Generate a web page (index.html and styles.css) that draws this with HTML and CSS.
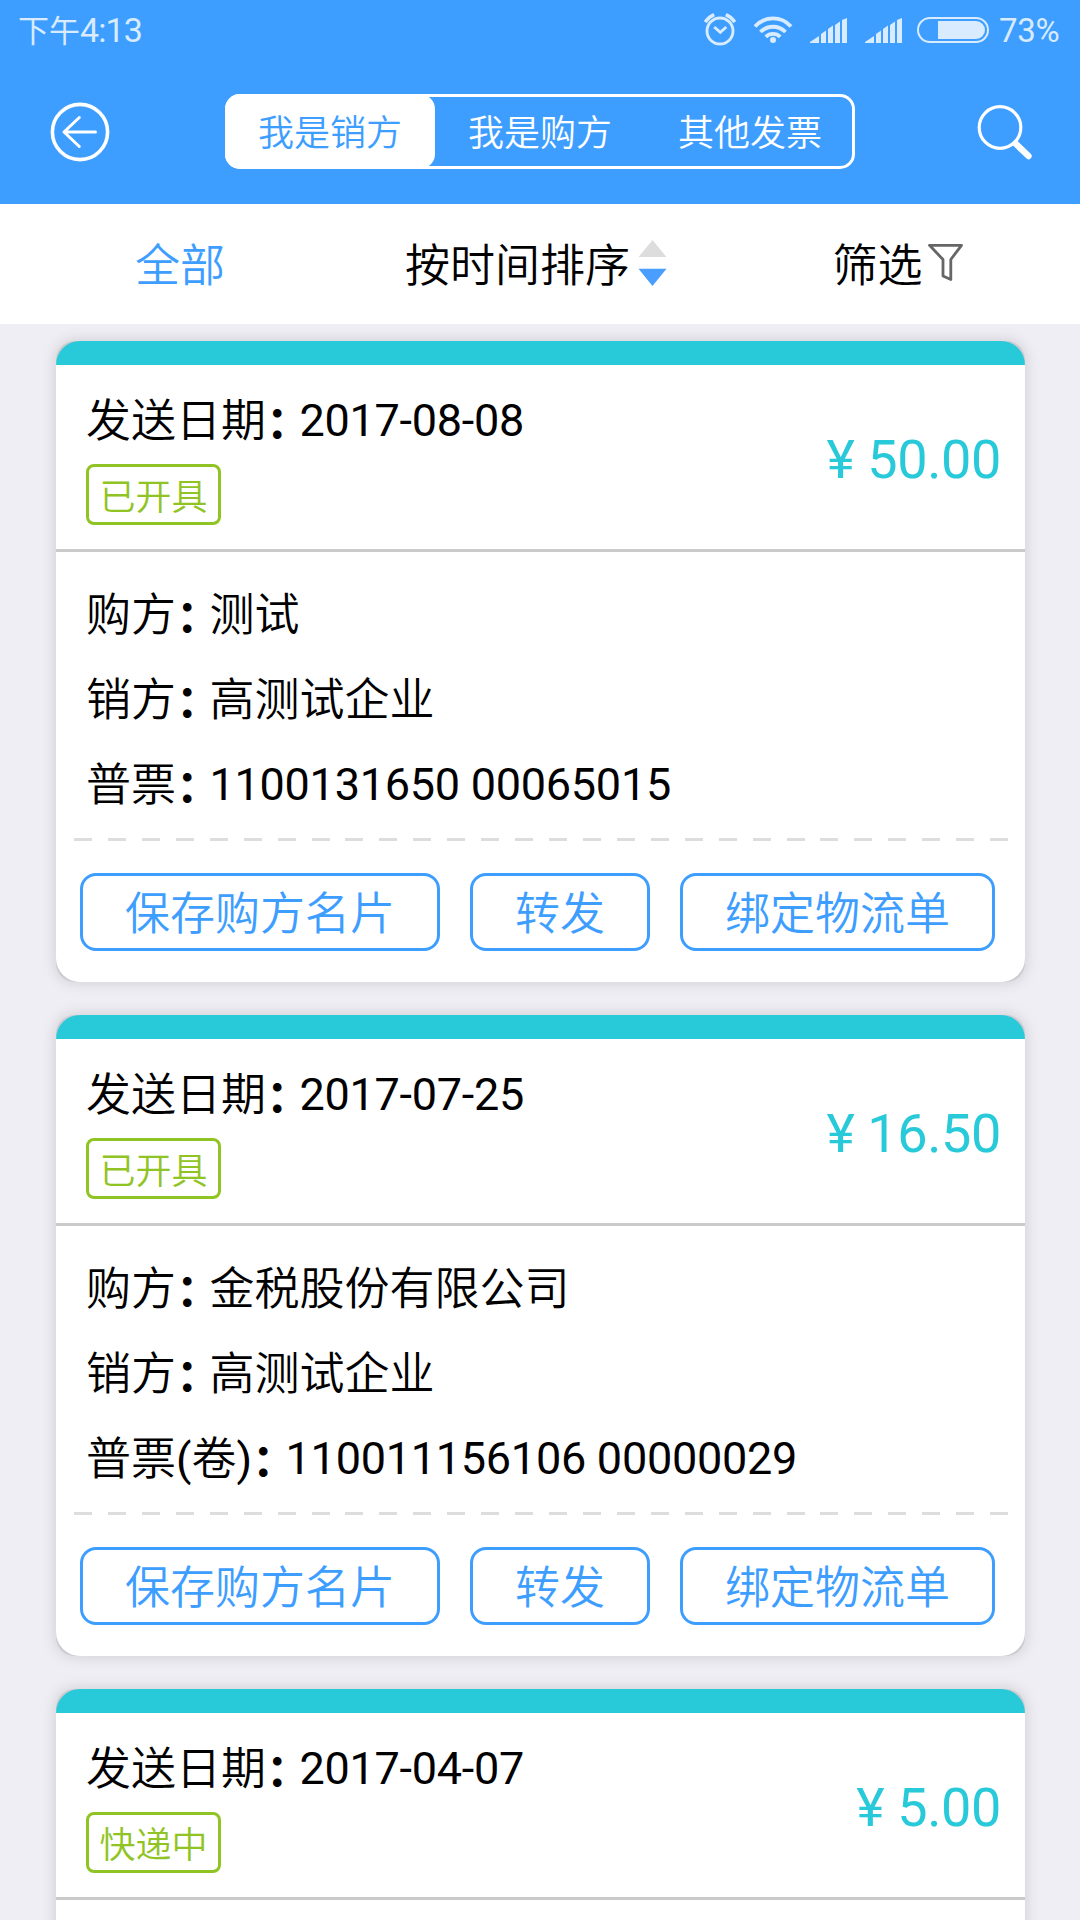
FILE: index.html
```
<!DOCTYPE html>
<html lang="zh-CN">
<head>
<meta charset="utf-8">
<title>发票</title>
<link rel="stylesheet" href="styles.css">
</head>
<body>
<div class="screen">
  <header class="header">
    <div class="status">
      <span class="clock">下午<span class="digits">4:13</span></span>
      <div class="status-icons">
        <svg class="i-alarm" width="34" height="34" viewBox="0 0 34 34" fill="none" stroke="currentColor" stroke-width="2.9">
          <circle cx="17" cy="19" r="13"/>
          <path d="M11.2 15l6.1 5.4 6-5.4"/>
          <path d="M2.2 10.2Q5.5 5 11.2 2.6M31.8 10.2Q28.5 5 22.8 2.6" stroke-width="3.4"/>
        </svg>
        <svg class="i-wifi" width="40" height="30" viewBox="0 0 40 30" fill="none" stroke="currentColor" stroke-width="3.8">
          <path d="M2 12.6A24 24 0 0 1 38 12.6"/>
          <path d="M7.5 18A17.5 17.5 0 0 1 32.5 18"/>
          <path d="M12.8 22.8A10.3 10.3 0 0 1 27.2 22.8"/>
          <circle cx="20" cy="26" r="3" fill="currentColor" stroke="none"/>
        </svg>
        <svg class="i-signal" width="37" height="26" viewBox="0 0 37 26" fill="currentColor">
          <path d="M0 25v-1l9-6v7zM11 25V16l5-3.5V25zM18 25V11l5-3.5V25zM25 25V7l5-3.5V25zM32 25V2l5-2V25z"/>
        </svg>
        <svg class="i-signal" width="37" height="26" viewBox="0 0 37 26" fill="currentColor">
          <path d="M0 25v-1l9-6v7zM11 25V16l5-3.5V25zM18 25V11l5-3.5V25zM25 25V7l5-3.5V25zM32 25V2l5-2V25z"/>
        </svg>
        <svg class="i-battery" width="72" height="26" viewBox="0 0 72 26">
          <rect x="1" y="1" width="70" height="24" rx="12" fill="none" stroke="currentColor" stroke-width="2"/>
          <path d="M21 4H59a9 9 0 0 1 0 18H21z" fill="currentColor"/>
        </svg>
        <span class="percent">73%</span>
      </div>
    </div>
    <nav class="nav">
      <svg class="i-back" width="60" height="60" viewBox="0 0 60 60" fill="none" stroke="#fff" stroke-linecap="round" stroke-linejoin="round">
        <circle cx="30" cy="30" r="27.6" stroke-width="3.6"/>
        <path d="M45.5 30H14M29.3 15.5L14 30L29.3 44.5" stroke-width="3"/>
      </svg>
      <div class="tabs">
        <span class="tab active">我是销方</span>
        <span class="tab">我是购方</span>
        <span class="tab">其他发票</span>
      </div>
      <svg class="i-search" width="56" height="56" viewBox="0 0 56 56" fill="none" stroke="#fff" stroke-linecap="round">
        <circle cx="23" cy="23.5" r="20.8" stroke-width="3.2"/>
        <path d="M38.5 39.5L51.5 52" stroke-width="6.4"/>
      </svg>
    </nav>
  </header>
  <div class="filters">
    <div class="filter on">全部</div>
    <div class="filter">按时间排序<svg width="45" height="48" viewBox="0 0 45 48"><path d="M22.5 0L36.5 17H8.5z" fill="#ddd"/><path d="M22.5 46L36.5 28.7H8.5z" fill="#4a9eff"/></svg></div>
    <div class="filter">筛选<svg width="45" height="48" viewBox="0 0 45 48" fill="none" stroke="#666" stroke-width="2.8" stroke-linejoin="round"><path d="M6.5 5.3H38.5L27.8 19.5V39.5L20 36V19.5z"/></svg></div>
  </div>
  <main class="list">
    <section class="card"><div class="sheet">
      <div class="summary">
        <div class="meta"><div class="line">发送日期<span class="colon">：</span> <span class="num">2017-08-08</span></div><span class="tag">已开具</span></div>
        <div class="amount">¥ 50.00</div>
      </div>
      <div class="details">
        <div class="line">购方<span class="colon">：</span> 测试</div>
        <div class="line">销方<span class="colon">：</span> 高测试企业</div>
        <div class="line">普票<span class="colon">：</span> <span class="num">1100131650 00065015</span></div>
      </div>
      <div class="dashes"></div>
      <div class="actions"><span class="btn">保存购方名片</span><span class="btn">转发</span><span class="btn">绑定物流单</span></div>
    </div></section>
    <section class="card"><div class="sheet">
      <div class="summary">
        <div class="meta"><div class="line">发送日期<span class="colon">：</span> <span class="num">2017-07-25</span></div><span class="tag">已开具</span></div>
        <div class="amount">¥ 16.50</div>
      </div>
      <div class="details">
        <div class="line">购方<span class="colon">：</span> 金税股份有限公司</div>
        <div class="line">销方<span class="colon">：</span> 高测试企业</div>
        <div class="line">普票<span class="paren">(</span>卷<span class="paren">)</span><span class="colon">：</span> <span class="num">110011156106 00000029</span></div>
      </div>
      <div class="dashes"></div>
      <div class="actions"><span class="btn">保存购方名片</span><span class="btn">转发</span><span class="btn">绑定物流单</span></div>
    </div></section>
    <section class="card"><div class="sheet">
      <div class="summary">
        <div class="meta"><div class="line">发送日期<span class="colon">：</span> <span class="num">2017-04-07</span></div><span class="tag">快递中</span></div>
        <div class="amount">¥ 5.00</div>
      </div>
      <div class="details"></div>
    </div></section>
  </main>
</div>
</body>
</html>
```
FILE: styles.css
```
* { box-sizing: border-box; }
body { margin: 0; background: #efeef4; }
svg { display: block; flex: none; }

.screen {
  width: 1080px;
  height: 1920px;
  overflow: hidden;
  font-family: Roboto, "Noto Sans CJK SC", sans-serif;
  font-size: 45px;
  font-weight: 350;
  color: #000;
  white-space: nowrap;
}

/* Header */
.header { height: 204px; background: #3d9eff; }
.status {
  height: 60px;
  padding: 0 18px 0 18px;
  display: flex;
  justify-content: space-between;
  align-items: center;
  color: #d8ebff;
  font-size: 33px;
  font-weight: 400;
  line-height: 62px;
}
.clock { padding-top: 2px; font-size: 31px; }
.digits { font-size: 34px; letter-spacing: -.9px; }
.status-icons { display: flex; align-items: flex-start; height: 60px; }
.i-alarm { margin-top: 12px; }
.i-wifi { margin: 14px 0 0 16px; }
.i-signal { margin: 18px 0 0 18px; }
.i-wifi + .i-signal { margin-left: 17px; }
.i-battery { margin: 17px 0 0 15px; }
.percent { width: 63px; margin-left: 10px; letter-spacing: -.3px; }

.nav { height: 144px; display: flex; align-items: flex-start; }
.i-back { margin: 42px 0 0 50px; }
.tabs {
  width: 630px;
  height: 75px;
  margin: 34px 0 0 115px;
  display: flex;
  border-radius: 15px;
  box-shadow: inset 0 0 0 3px #fff;
}
.tab {
  width: 210px;
  font-size: 36px;
  line-height: 81px;
  text-align: center;
  color: #fff;
}
.tab.active { height: 75px; background: #fff; color: #3d9eff; border-radius: 15px; }
.i-search { margin: 44px 0 0 122px; }

/* Filter bar */
.filters { height: 120px; display: flex; background: #fff; }
.filter { width: 360px; display: flex; justify-content: center; line-height: 125px; }
.filter svg { margin-top: 36px; }
.filter.on { color: #3d9eff; }

/* Invoice cards */
.list { padding: 17px 55px 0 56px; display: flex; flex-direction: column; gap: 33px; }
.card {
  flex: none;
  height: 641px;
  border-radius: 19px;
  background: #cccbd0;
  box-shadow: 0 0 15px rgba(0, 0, 0, .15);
}
.sheet {
  height: 641px;
  border-radius: 24px;
  border-top: 24px solid #28c9d9;
  background: #fff;
  overflow: hidden;
}
.summary {
  height: 187px;
  padding: 0 24px 0 30px;
  display: flex;
  justify-content: space-between;
  border-bottom: 3px solid #cacaca;
}
.line { height: 85px; line-height: 89px; }
.meta { padding-top: 13px; }
.meta .line { height: 86px; line-height: 87px; }
.colon { letter-spacing: -.5em; font-weight: 700; line-height: 0; vertical-align: -2px; }
.num { letter-spacing: -.26px; line-height: 0; vertical-align: 1px; font-weight: 400; }
.paren { font-weight: 400; }
.tag {
  display: block;
  width: 135px;
  height: 61px;
  border: 3px solid #90c424;
  border-radius: 8px;
  color: #90c424;
  font-size: 36px;
  line-height: 62px;
  text-align: center;
}
.amount { color: #28c9d9; font-size: 54px; font-weight: 400; letter-spacing: -.4px; line-height: 190px; }
.details { height: 286px; padding: 19px 30px 0; }
.dashes {
  height: 3px;
  margin: 0 17px 0 18px;
  background: repeating-linear-gradient(90deg, #ddd 0 18px, transparent 18px 33.93px);
}
.actions { padding: 32px 24px 0; display: flex; gap: 30px; }
.btn {
  height: 78px;
  padding: 0 42px;
  border: 3px solid #3d9eff;
  border-radius: 16px;
  color: #3d9eff;
  line-height: 78px;
}
```
